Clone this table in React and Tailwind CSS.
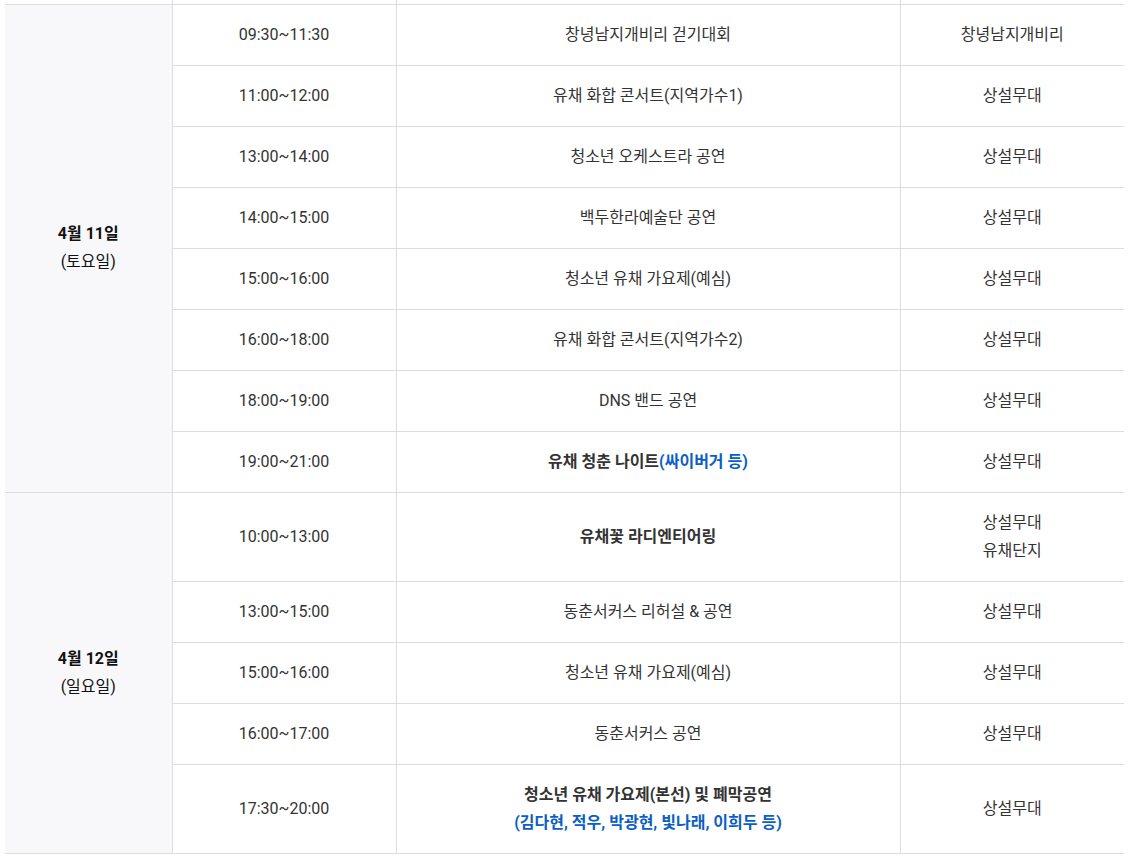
import React from "react";

const day1 = [
  ["09:30~11:30", "창녕남지개비리 걷기대회", ["창녕남지개비리"]],
  ["11:00~12:00", "유채 화합 콘서트(지역가수1)", ["상설무대"]],
  ["13:00~14:00", "청소년 오케스트라 공연", ["상설무대"]],
  ["14:00~15:00", "백두한라예술단 공연", ["상설무대"]],
  ["15:00~16:00", "청소년 유채 가요제(예심)", ["상설무대"]],
  ["16:00~18:00", "유채 화합 콘서트(지역가수2)", ["상설무대"]],
  ["18:00~19:00", "DNS 밴드 공연", ["상설무대"]],
  [
    "19:00~21:00",
    <span className="font-bold">
      유채 청춘 나이트<span className="text-[#0b5ec4]">(싸이버거 등)</span>
    </span>,
    ["상설무대"],
  ],
];

const day2 = [
  ["10:00~13:00", <span className="font-bold">유채꽃 라디엔티어링</span>, ["상설무대", "유채단지"], true],
  ["13:00~15:00", "동춘서커스 리허설 & 공연", ["상설무대"]],
  ["15:00~16:00", "청소년 유채 가요제(예심)", ["상설무대"]],
  ["16:00~17:00", "동춘서커스 공연", ["상설무대"]],
  [
    "17:30~20:00",
    <span className="font-bold">
      청소년 유채 가요제(본선) 및 폐막공연
      <br />
      <span className="text-[#0b5ec4]">(김다현, 적우, 박광현, 빛나래, 이희두 등)</span>
    </span>,
    ["상설무대"],
    true,
  ],
];

const cell = "border border-[#dddddd] text-center align-middle p-0";

function DayRows({ label, weekday, rows }) {
  return rows.map(([time, title, places, tall], i) => (
    <tr key={i} className={tall ? "h-[89px]" : "h-[61px]"}>
      {i === 0 && (
        <td rowSpan={rows.length} className={`${cell} border-l-0 bg-[#f8f8fa] text-[#111]`}>
          <div className="font-bold">{label}</div>
          <div>{weekday}</div>
        </td>
      )}
      <td className={cell}>{time}</td>
      <td className={cell}>{title}</td>
      <td className={`${cell} border-r-0`}>
        {places.map((p) => (
          <div key={p}>{p}</div>
        ))}
      </td>
    </tr>
  ));
}

export default function App() {
  return (
    <div className="min-h-screen bg-white pl-[5px] font-['Roboto','Noto_Sans_CJK_KR',sans-serif] text-[16px] leading-[28px] text-[#333]">
      <table className="w-[1119px] table-fixed border-collapse">
        <colgroup>
          <col className="w-[167px]" />
          <col className="w-[224px]" />
          <col className="w-[504px]" />
          <col className="w-[224px]" />
        </colgroup>
        <tbody>
          <tr className="h-[4px]">
            <td className={`${cell} border-t-0 border-l-0 bg-white`} />
            <td className={`${cell} border-t-0`} />
            <td className={`${cell} border-t-0`} />
            <td className={`${cell} border-t-0 border-r-0`} />
          </tr>
          <DayRows label="4월 11일" weekday="(토요일)" rows={day1} />
          <DayRows label="4월 12일" weekday="(일요일)" rows={day2} />
        </tbody>
      </table>
    </div>
  );
}
